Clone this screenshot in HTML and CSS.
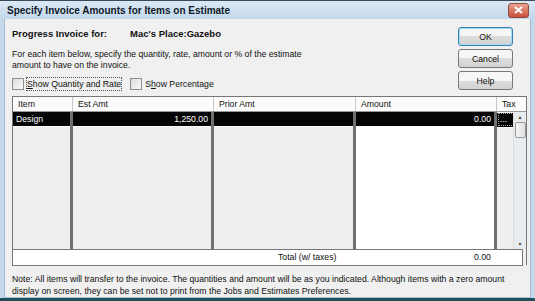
FILE: index.html
```html
<!DOCTYPE html>
<html lang="en">
<head>
    <meta charset="UTF-8">
    <title>Specify Invoice Amounts for Items on Estimate</title>
    <link rel="stylesheet" href="styles.css">
</head>
<body>
    <div class="window">
        <!-- Title bar -->
        <div class="titlebar">
            <span class="title">Specify Invoice Amounts for Items on Estimate</span>
            <span class="close">
                <svg width="9" height="8" viewBox="0 0 9 8"><path d="M1 1 L8 7 M8 1 L1 7" stroke="#fff" stroke-width="2"/></svg>
            </span>
        </div>

        <div class="client">
            <div class="top">
                <div class="info">
                    <div class="for">
                        <span class="for-label">Progress Invoice for:</span>
                        <span class="for-job">Mac's Place:Gazebo</span>
                    </div>
                    <p class="desc">For each item below, specify the quantity, rate, amount or % of the estimate<br>amount to have on the invoice.</p>
                    <div class="options">
                        <label class="opt"><span class="box"></span><span class="lbl focus"><u>S</u>how Quantity and Rate</span></label>
                        <label class="opt"><span class="box"></span><span class="lbl">S<u>h</u>ow Percentage</span></label>
                    </div>
                </div>
                <div class="buttons">
                    <button class="btn default">OK</button>
                    <button class="btn">Cancel</button>
                    <button class="btn">Help</button>
                </div>
            </div>

            <!-- Items grid -->
            <div class="grid">
                <div class="head">
                    <div class="c item">Item</div>
                    <div class="c est">Est Amt</div>
                    <div class="c prior">Prior Amt</div>
                    <div class="c amount">Amount</div>
                    <div class="c tax">Tax</div>
                </div>
                <div class="body">
                    <div class="cols">
                        <div class="col item"><div class="sel">Design</div></div>
                        <div class="col est"><div class="sel num">1,250.00</div></div>
                        <div class="col prior"><div class="sel"></div></div>
                        <div class="col amount"><div class="sel num">0.00</div></div>
                        <div class="col tax"><div class="sel"><span class="dots">...</span></div></div>
                    </div>
                    <div class="scroll">
                        <span class="arrow">&#9650;</span>
                        <span class="thumb"></span>
                        <span class="track"></span>
                        <span class="arrow">&#9660;</span>
                    </div>
                </div>
                <div class="total">
                    <span class="total-label">Total (w/ taxes)</span>
                    <span class="total-value">0.00</span>
                </div>
            </div>

            <p class="note">Note: All items will transfer to the invoice. The quantities and amount will be as you indicated. Although items with a zero amount<br>display on screen, they can be set not to print from the Jobs and Estimates Preferences.</p>
        </div>
    </div>
</body>
</html>
```

FILE: styles.css
```css
/* Dialog window */
body {
    margin: 0;
    padding: 0;
    font-family: "Liberation Sans", Arial, sans-serif;
    font-size: 8.7px;
    color: #111;
    background: #0c2a33;
}

.window {
    width: 535px;
    height: 301px;
    box-sizing: border-box;
    display: flex;
    flex-direction: column;
    background: #c6d9ec;
    border-top: 1px solid #3a4a5a;
    border-bottom: 3px solid #1f4f5c;
    overflow: hidden;
}

.titlebar {
    height: 19px;
    display: flex;
    align-items: center;
    justify-content: space-between;
    padding: 0 6px 0 7px;
    background: linear-gradient(#dce8f5, #c3d7ec);
}

.title {
    font-weight: bold;
    font-size: 10px;
    color: #0f1a26;
}

.close {
    width: 19px;
    height: 13px;
    display: flex;
    align-items: center;
    justify-content: center;
    background: linear-gradient(#e9a291, #c8503a);
    border: 1px solid #8d4a3e;
    border-radius: 3px;
}

.client {
    flex: 1;
    min-width: 0;
    margin: 0 4px;
    padding: 0 3px 0 7px;
    background: #f0f0f0;
    border: 1px solid #a8bacc;
    border-top: none;
    display: flex;
    flex-direction: column;
}

.top {
    display: flex;
    justify-content: space-between;
    height: 77px;
}

.for {
    display: flex;
    margin-top: 9px;
    font-weight: bold;
    font-size: 9.5px;
}

.for-label {
    width: 118px;
}

.desc {
    margin: 10px 0 0 0;
    line-height: 11px;
}

.options {
    display: flex;
    gap: 8px;
    margin-top: 6px;
}

.opt {
    display: flex;
    align-items: center;
    gap: 2px;
}

.box {
    width: 10px;
    height: 10px;
    border: 1px solid #8f8f8f;
    background: linear-gradient(135deg, #dcdcdc, #fafafa);
}

.lbl {
    padding: 1px 0;
    border: 1px dotted transparent;
}

.lbl.focus {
    border-color: #555;
}

.buttons {
    display: flex;
    flex-direction: column;
    gap: 3px;
    margin-top: 8px;
    margin-right: 14px;
}

.btn {
    width: 55px;
    height: 19px;
    font-family: inherit;
    font-size: 8.7px;
    color: #111;
    border: 1px solid #777;
    border-radius: 3px;
    background: linear-gradient(#f6f6f6 50%, #dddddd 50%, #d2d2d2);
    padding: 0;
}

.btn.default {
    border-color: #3c7fb1;
    box-shadow: inset 0 0 0 1px #9fdcf3;
}

/* Grid */
.grid {
    display: flex;
    flex-direction: column;
    border: 1px solid #777;
    border-bottom: none;
}

.head {
    display: flex;
    height: 14px;
    background: #fbfbfb;
    border-bottom: 1px solid #999;
}

.head .c {
    padding-left: 5px;
    box-sizing: border-box;
    line-height: 14px;
    border-right: 1px solid #c8c8c8;
}

.item { width: 60px; }
.est { width: 141px; }
.prior { width: 142px; }
.amount { width: 141px; }
.head .tax { width: 29px; border-right: none; }

.body {
    display: flex;
    height: 137px;
}

.cols {
    display: flex;
}

.col {
    box-sizing: border-box;
    border-right: 3px solid #707070;
    background: #efefef;
}

.col.amount {
    background: #fff;
}

.col.tax {
    width: 16px;
    border-right: none;
}

.sel {
    height: 14px;
    line-height: 14px;
    background: #050505;
    color: #fff;
    padding: 0 3px;
    border-bottom: 1px solid #fff;
}

.sel.num {
    text-align: right;
}

.dots {
    display: block;
    line-height: 11px;
    margin: 1px -2px 0 -2px;
    border: 1px dotted #aaa;
    border-right: none;
    padding-left: 1px;
}

.scroll {
    width: 13px;
    display: flex;
    flex-direction: column;
    align-items: center;
    background: #e9ecee;
    border-left: 1px solid #ddd;
    box-sizing: border-box;
}

.arrow {
    font-size: 5px;
    height: 10px;
    line-height: 10px;
    color: #444;
}

.thumb {
    width: 9px;
    height: 14px;
    border: 1px solid #999;
    border-radius: 2px;
    background: linear-gradient(90deg, #f5f5f5, #e0e0e0);
}

.track {
    flex: 1;
}

.total {
    display: flex;
    height: 15px;
    line-height: 15px;
    background: #fff;
    border: 1px solid #777;
    padding-left: 265px;
    margin: 0 3px -1px -1px;
}

.total-label {
    width: 196px;
}

.note {
    margin: 8px 0 0 0;
    line-height: 12px;
}
```
